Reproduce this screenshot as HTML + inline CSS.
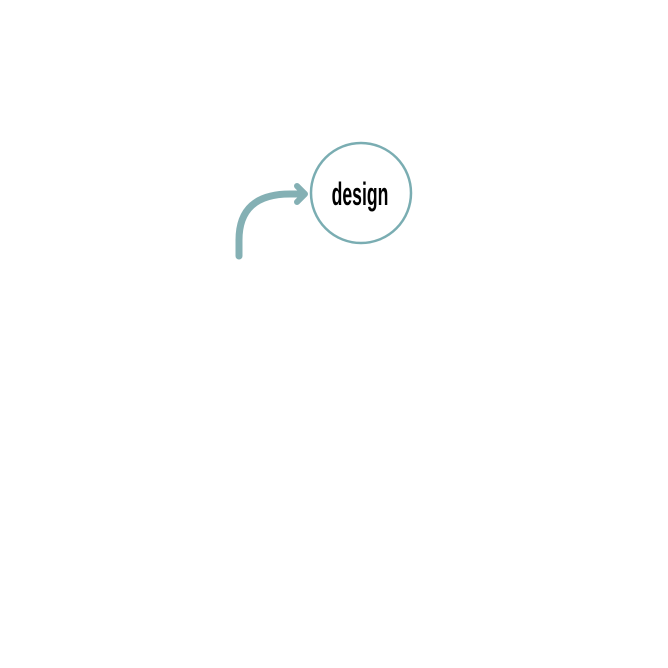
<!DOCTYPE html>
<html><head><style>
html,body{margin:0;padding:0;background:#fff;width:668px;height:668px;overflow:hidden}
</style></head><body>
<svg width="668" height="668" xmlns="http://www.w3.org/2000/svg">
<circle cx="361" cy="193" r="50" fill="none" stroke="#7aadb2" stroke-width="2.5"/>
<path d="M239 256 L239 240 Q239 194 290 194 L304 194" fill="none" stroke="#84b0b4" stroke-width="7" stroke-linecap="round"/>
<path d="M297 186 L305 194 L297 202" fill="none" stroke="#84b0b4" stroke-width="6" stroke-linecap="round" stroke-linejoin="round"/>
<text x="0" y="0" transform="translate(360,205) scale(0.55,1)" text-anchor="middle" font-family="Liberation Sans, sans-serif" font-weight="bold" font-size="32" fill="#000">design</text>
</svg>
</body></html>
